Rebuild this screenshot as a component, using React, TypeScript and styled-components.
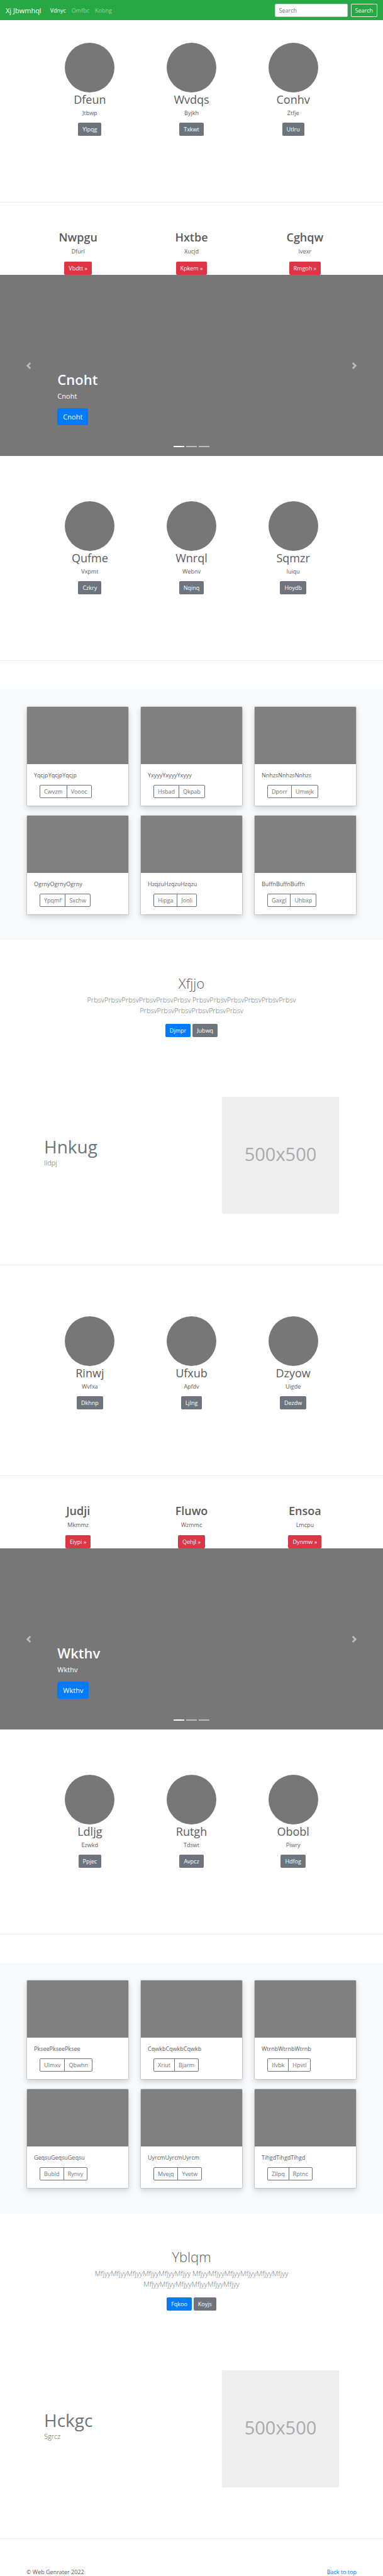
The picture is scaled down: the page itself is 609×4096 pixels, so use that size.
import React from "react";
import styled, { createGlobalStyle } from "styled-components";

const GlobalStyle = createGlobalStyle`
  *, *::before, *::after { box-sizing: border-box; }
  body {
    margin: 0;
    background: #fff;
    color: #5a5a5a;
    font-family: "Segoe UI", "Open Sans", "Noto Sans", sans-serif;
    font-size: 9px;
    line-height: 13px;
  }
  h1, h2, p { margin: 0; }
  a { text-decoration: none; }
  button, input { font: inherit; margin: 0; }
`;

const Navbar = styled.nav`
  display: flex;
  align-items: center;
  height: 32px;
  padding: 0 9px;
  background: #28a745;
`;

const Brand = styled.a`
  margin-right: 14px;
  color: #fff;
  font-size: 11px;
  line-height: 17px;
`;

const NavLinks = styled.div`
  display: flex;
  flex: 1;
  gap: 9px;
`;

const NavLink = styled.a<{ $active?: boolean }>`
  color: ${(p) => (p.$active ? "#fff" : "rgba(255, 255, 255, 0.5)")};
`;

const SearchForm = styled.form`
  display: flex;
  gap: 5px;
`;

const SearchInput = styled.input`
  width: 116px;
  height: 21px;
  padding: 0 6px;
  border: 1px solid #ced4da;
  border-radius: 2px;
  background: #fff;
  color: #495057;
  &::placeholder { color: #6c757d; opacity: 1; }
`;

const SearchButton = styled.button`
  height: 21px;
  padding: 0 6px;
  border: 1px solid #f8f9fa;
  border-radius: 2px;
  background: transparent;
  color: #f8f9fa;
`;

const buttonColors = { primary: "#007bff", secondary: "#6c757d", danger: "#dc3545" };

const Button = styled.button<{ $kind: keyof typeof buttonColors; $large?: boolean }>`
  height: ${(p) => (p.$large ? 27 : 21)}px;
  padding: 0 ${(p) => (p.$large ? 9 : 7)}px;
  border: 0;
  border-radius: ${(p) => (p.$large ? 3 : 2)}px;
  background: ${(p) => buttonColors[p.$kind]};
  color: #fff;
  font-size: ${(p) => (p.$large ? 11 : 9)}px;
`;

const Divider = styled.hr`
  height: 1px;
  margin: 0;
  border: 0;
  background: #e8e8e8;
`;

const CircleRow = styled.section<{ $top: number }>`
  display: grid;
  grid-template-columns: repeat(3, 1fr);
  padding: ${(p) => p.$top}px 62px 105px;
`;

const CircleColumn = styled.div`
  display: flex;
  flex-direction: column;
  align-items: center;
`;

const Circle = styled.div`
  width: 79px;
  height: 79px;
  border-radius: 50%;
  background: #777;
`;

const CircleTitle = styled.h2`
  margin-bottom: 4px;
  font-size: 18px;
  font-weight: 400;
  line-height: 22px;
`;

const CircleText = styled.p`
  margin-bottom: 9px;
`;

const HeadingRow = styled.section`
  display: grid;
  grid-template-columns: repeat(3, 1fr);
  padding: 44px 34px 0;
`;

const HeadingColumn = styled.div`
  display: flex;
  flex-direction: column;
  align-items: center;
`;

const HeadingTitle = styled.h2`
  margin-bottom: 5px;
  font-size: 18px;
  font-weight: 600;
  line-height: 22px;
`;

const HeadingText = styled.p`
  margin-bottom: 10px;
`;

const CarouselFrame = styled.section`
  position: relative;
  display: grid;
  grid-template-columns: 15fr 70fr 15fr;
  height: 288px;
  background: #777;
  color: #fff;
`;

const ArrowButton = styled.button`
  display: flex;
  align-items: center;
  justify-content: center;
  padding: 0;
  border: 0;
  background: transparent;
  opacity: 0.5;
`;

const Caption = styled.div`
  align-self: end;
  padding-bottom: 49px;
`;

const CaptionTitle = styled.h1`
  margin-bottom: 4px;
  font-size: 22px;
  font-weight: 600;
  line-height: 27px;
`;

const CaptionText = styled.p`
  margin-bottom: 11px;
  font-size: 11px;
  line-height: 17px;
`;

const Indicators = styled.div`
  position: absolute;
  right: 0;
  bottom: 14px;
  left: 0;
  display: flex;
  justify-content: center;
  gap: 3px;
`;

const Indicator = styled.button<{ $active: boolean }>`
  width: 17px;
  height: 2px;
  padding: 0;
  border: 0;
  background: #fff;
  opacity: ${(p) => (p.$active ? 1 : 0.5)};
`;

const AlbumSection = styled.section`
  display: grid;
  grid-template-columns: repeat(3, 1fr);
  gap: 14px 18px;
  margin-top: 45px;
  padding: 27px 42px 40px;
  background: #f8f9fa;
`;

const Card = styled.article`
  overflow: hidden;
  border: 1px solid rgba(0, 0, 0, 0.125);
  border-radius: 2px;
  background: #fff;
  background-clip: padding-box;
  box-shadow: 0 4px 9px rgba(0, 0, 0, 0.15);
`;

const CardImage = styled.div`
  height: 91px;
  background: #808080;
`;

const CardBody = styled.div`
  padding: 11px 11px 12px;
`;

const CardText = styled.p`
  margin-bottom: 9px;
`;

const ButtonGroup = styled.div`
  display: flex;
  margin-left: 9px;
`;

const GroupButton = styled.button`
  height: 21px;
  padding: 0 6px;
  border: 1px solid #6c757d;
  border-radius: 2px 0 0 2px;
  background: transparent;
  color: #6c757d;
  & + & {
    margin-left: -1px;
    border-radius: 0 2px 2px 0;
  }
`;

const HeroSection = styled.section`
  display: flex;
  flex-direction: column;
  align-items: center;
  padding: 55px 42px 95px;
  text-align: center;
`;

const HeroTitle = styled.h1`
  margin-bottom: 4px;
  font-size: 22px;
  font-weight: 300;
  line-height: 27px;
`;

const HeroText = styled.p`
  width: 66%;
  margin-bottom: 13px;
  color: #6c757d;
  font-size: 11px;
  font-weight: 300;
  line-height: 17px;
`;

const HeroActions = styled.div`
  display: flex;
  gap: 3px;
`;

const FeatureSection = styled.section`
  display: flex;
  align-items: center;
  justify-content: space-between;
  padding: 0 70px 81px;
`;

const FeatureCopy = styled.div`
  padding-bottom: 12px;
`;

const FeatureTitle = styled.h2`
  color: #6c757d;
  font-size: 28px;
  font-weight: 400;
  line-height: 34px;
`;

const FeatureText = styled.p`
  font-size: 11px;
  font-weight: 300;
  line-height: 17px;
`;

const Placeholder = styled.div`
  display: flex;
  align-items: center;
  justify-content: center;
  width: 186px;
  height: 186px;
  padding-bottom: 4px;
  background: #eee;
  color: #aaa;
  font-size: 29px;
  line-height: 40px;
`;

const Footer = styled.footer`
  display: flex;
  justify-content: space-between;
  padding: 46px 42px 0;
`;

const FooterLink = styled.a`
  color: #007bff;
`;

type Item = [title: string, text: string, action: string];
type CardItem = [text: string, first: string, second: string];

function Circles({ items, top }: { items: Item[]; top: number }) {
  return (
    <CircleRow $top={top}>
      {items.map(([title, text, action]) => (
        <CircleColumn key={title}>
          <Circle />
          <CircleTitle>{title}</CircleTitle>
          <CircleText>{text}</CircleText>
          <Button type="button" $kind="secondary">{action}</Button>
        </CircleColumn>
      ))}
    </CircleRow>
  );
}

function Headings({ items }: { items: Item[] }) {
  return (
    <HeadingRow>
      {items.map(([title, text, action]) => (
        <HeadingColumn key={title}>
          <HeadingTitle>{title}</HeadingTitle>
          <HeadingText>{text}</HeadingText>
          <Button type="button" $kind="danger">{action} »</Button>
        </HeadingColumn>
      ))}
    </HeadingRow>
  );
}

function Carousel({ label }: { label: string }) {
  return (
    <CarouselFrame>
      <ArrowButton type="button" aria-label="Previous">
        <svg width="11" height="11" viewBox="0 0 8 8" fill="#fff">
          <path d="M5.25 0l-4 4 4 4 1.5-1.5L4.25 4l2.5-2.5L5.25 0z" />
        </svg>
      </ArrowButton>
      <Caption>
        <CaptionTitle>{label}</CaptionTitle>
        <CaptionText>{label}</CaptionText>
        <Button type="button" $kind="primary" $large>{label}</Button>
      </Caption>
      <ArrowButton type="button" aria-label="Next">
        <svg width="11" height="11" viewBox="0 0 8 8" fill="#fff">
          <path d="M2.75 0l-1.5 1.5L3.75 4l-2.5 2.5L2.75 8l4-4-4-4z" />
        </svg>
      </ArrowButton>
      <Indicators>
        {[0, 1, 2].map((n) => (
          <Indicator key={n} type="button" aria-label={`Slide ${n + 1}`} $active={n === 0} />
        ))}
      </Indicators>
    </CarouselFrame>
  );
}

function Album({ items }: { items: CardItem[] }) {
  return (
    <AlbumSection>
      {items.map(([text, first, second]) => (
        <Card key={text}>
          <CardImage />
          <CardBody>
            <CardText>{text}</CardText>
            <ButtonGroup>
              <GroupButton type="button">{first}</GroupButton>
              <GroupButton type="button">{second}</GroupButton>
            </ButtonGroup>
          </CardBody>
        </Card>
      ))}
    </AlbumSection>
  );
}

function Hero({ title, text, actions }: { title: string; text: string; actions: [string, string] }) {
  return (
    <HeroSection>
      <HeroTitle>{title}</HeroTitle>
      <HeroText>{text}</HeroText>
      <HeroActions>
        <Button type="button" $kind="primary">{actions[0]}</Button>
        <Button type="button" $kind="secondary">{actions[1]}</Button>
      </HeroActions>
    </HeroSection>
  );
}

function Feature({ title, text }: { title: string; text: string }) {
  return (
    <FeatureSection>
      <FeatureCopy>
        <FeatureTitle>{title}</FeatureTitle>
        <FeatureText>{text}</FeatureText>
      </FeatureCopy>
      <Placeholder>500x500</Placeholder>
    </FeatureSection>
  );
}

const repeatWord = (word: string) => Array(3).fill(word.repeat(6)).join(" ");

export default function App() {
  return (
    <>
      <GlobalStyle />
      <Navbar id="top">
        <Brand href="#top">Xj Jbwmhql</Brand>
        <NavLinks>
          <NavLink href="#top" $active>Vdnyc</NavLink>
          <NavLink href="#top">Omfbc</NavLink>
          <NavLink href="#top">Kobng</NavLink>
        </NavLinks>
        <SearchForm>
          <SearchInput type="text" placeholder="Search" aria-label="Search" />
          <SearchButton type="button">Search</SearchButton>
        </SearchForm>
      </Navbar>
      <main>
        <Circles
          top={36}
          items={[["Dfeun", "Jtbwp", "Ylpqg"], ["Wvdqs", "Byjkh", "Txkwt"], ["Conhv", "Ztfje", "Utlru"]]}
        />
        <Divider />
        <Headings items={[["Nwpgu", "Dfurl", "Vbdtt"], ["Hxtbe", "Xucjd", "Kpkem"], ["Cghqw", "Ivexr", "Rmgoh"]]} />
        <Carousel label="Cnoht" />
        <Circles
          top={72}
          items={[["Qufme", "Vxpmt", "Czkry"], ["Wnrql", "Webnv", "Nqinq"], ["Sqmzr", "Iuiqu", "Hoydb"]]}
        />
        <Divider />
        <Album
          items={[
            ["YqcjpYqcjpYqcjp", "Cwvzm", "Voooc"],
            ["YxyyyYxyyyYxyyy", "Hsbad", "Qkpab"],
            ["NnhzsNnhzsNnhzs", "Dporr", "Umwjk"],
            ["OgrnyOgrnyOgrny", "Ypqmf", "Sxchw"],
            ["HzqzuHzqzuHzqzu", "Hipga", "Jooli"],
            ["BuffnBuffnBuffn", "Gaxgl", "Uhbxp"],
          ]}
        />
        <Hero title="Xfjjo" text={repeatWord("Prbsv")} actions={["Djmpr", "Jubwq"]} />
        <Feature title="Hnkug" text="Ildpj" />
        <Divider />
        <Circles
          top={81}
          items={[["Rinwj", "Wvfxa", "Dkhnp"], ["Ufxub", "Apfdv", "Ljlng"], ["Dzyow", "Uigde", "Dezdw"]]}
        />
        <Divider />
        <Headings items={[["Judji", "Mkmmz", "Eiypi"], ["Fluwo", "Wzmmc", "Qehjl"], ["Ensoa", "Lmcpu", "Dynmw"]]} />
        <Carousel label="Wkthv" />
        <Circles
          top={72}
          items={[["Ldljg", "Ezwkd", "Ppjec"], ["Rutgh", "Tdswt", "Avpcz"], ["Obobl", "Piwry", "Hdfog"]]}
        />
        <Divider />
        <Album
          items={[
            ["PkseePkseePksee", "Ulmxv", "Qbwhn"],
            ["CqwkbCqwkbCqwkb", "Xriut", "Bjarm"],
            ["WtrnbWtrnbWtrnb", "Ifvbk", "Hpvtl"],
            ["GeqsuGeqsuGeqsu", "Bubld", "Rynvy"],
            ["UyrcmUyrcmUyrcm", "Mvejq", "Yvetw"],
            ["TihgdTihgdTihgd", "Zllpq", "Rptnc"],
          ]}
        />
        <Hero title="Yblqm" text={repeatWord("Mfjyy")} actions={["Fqkoo", "Koyjs"]} />
        <Feature title="Hckgc" text="Sgrcz" />
        <Divider />
      </main>
      <Footer>
        <span>© Web Genrater 2022</span>
        <FooterLink href="#top">Back to top</FooterLink>
      </Footer>
    </>
  );
}
